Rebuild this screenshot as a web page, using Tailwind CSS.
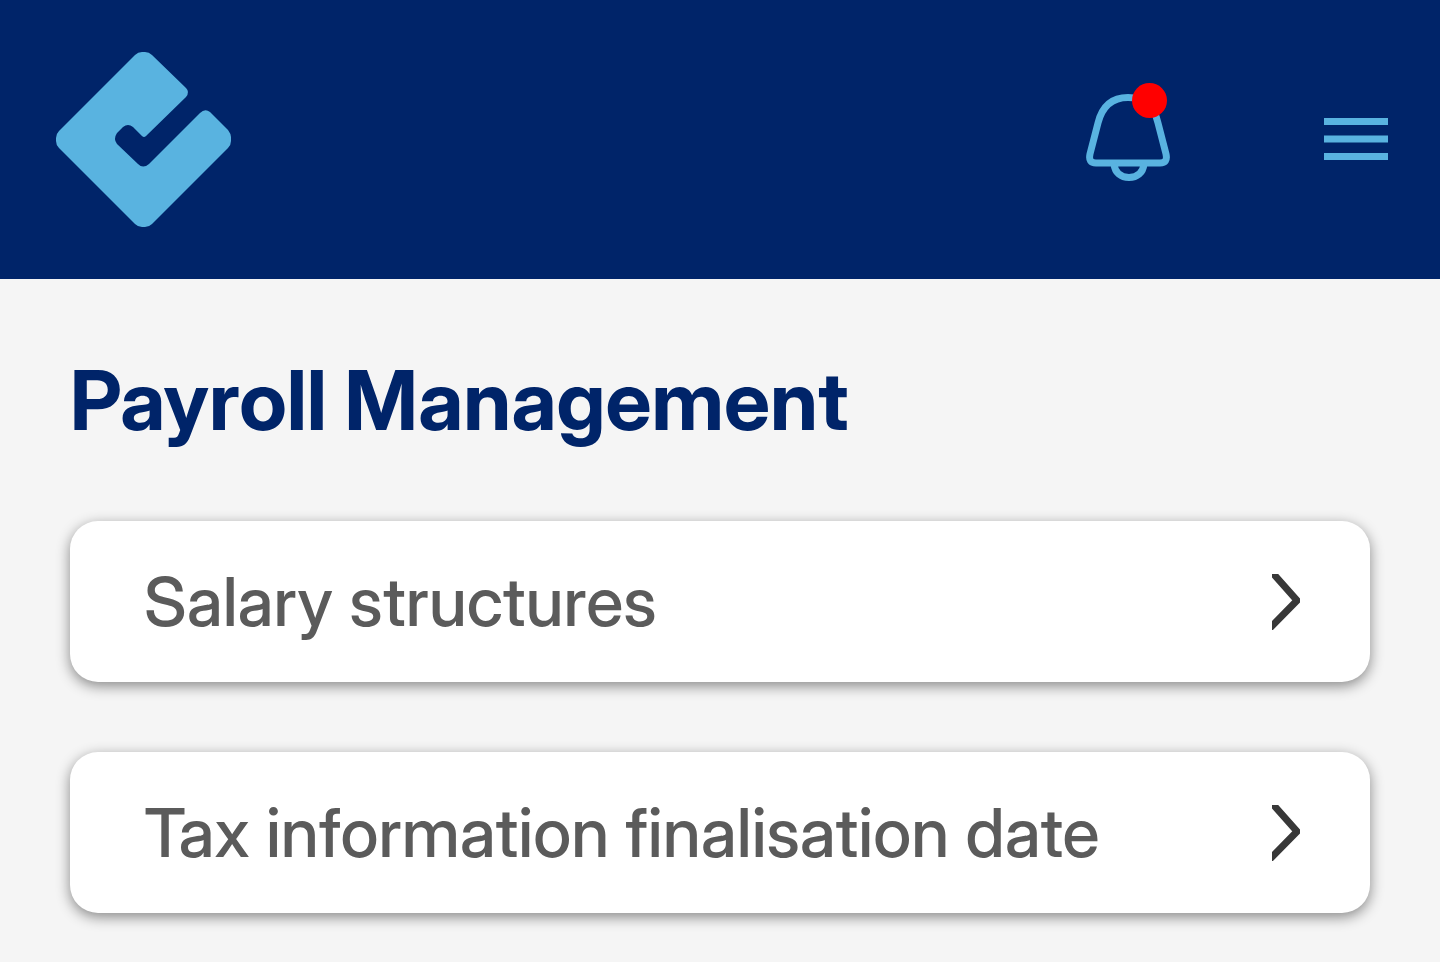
<!DOCTYPE html>
<html lang="en">
<head>
    <meta charset="UTF-8">
    <meta name="viewport" content="width=device-width, initial-scale=1.0">
    <title>Payroll Management</title>
    <script src="https://cdn.jsdelivr.net/npm/@tailwindcss/browser@4"></script>
</head>
<body class="min-h-screen bg-[#f5f5f5] font-['Inter_Display','Inter',sans-serif] [font-variation-settings:'opsz'_32]">

<!-- Top bar -->
<header class="flex items-center justify-between bg-[#002469] py-[52px] pl-14 pr-[52px]">
    <a href="#" aria-label="Home">
        <svg class="block size-[175px]" viewBox="0 0 175 175" fill="#59b3e0">
            <path d="M79 3Q82 0 86 0H89Q93 0 96 3L130 36Q134 40 130 45L90 84Q88 86 86 84L77 75Q72 71 67 75L61 81Q57 87 61 92L82 112Q87 117 93 112L144 61Q149 56 154 60L172 78Q175 82 175 85V89Q175 93 172 96L96 172Q93 175 89 175H86Q82 175 79 172L3 96Q0 93 0 89V86Q0 82 3 79Z"/>
        </svg>
    </a>
    <div class="flex items-center gap-[154px]">
        <button type="button" class="relative" aria-label="Notifications">
            <svg class="block h-[92px] w-[84px]" viewBox="0 0 84 92" fill="none" stroke="#59b3e0" stroke-width="7">
                <path d="M42 3.5C25 3.5 16 13 12 29L4 60Q2 69 10 69H74Q82 69 80 60L72 29C68 12 59 3.5 42 3.5Z"/>
                <path d="M28 70C29 79 35 83.5 43 83.5S57 79 58 70"/>
            </svg>
            <!-- Unread marker -->
            <span class="absolute -top-[11px] right-[3px] size-[35px] rounded-full bg-[#ff0000]"></span>
        </button>
        <button type="button" aria-label="Menu">
            <svg class="block h-11 w-16" viewBox="0 0 64 44" fill="#59b3e0">
                <path d="M0 0H64V7H0ZM0 17.5H64V24.5H0ZM0 35H64V42H0Z"/>
            </svg>
        </button>
    </div>
</header>

<main class="px-[70px] pt-[72px]">
    <h1 class="text-[82px] leading-[100px] font-bold text-[#002469]">Payroll Management</h1>

    <!-- Payroll sections -->
    <nav class="mt-[70px] flex flex-col gap-[70px]">
        <a href="#" class="flex items-center justify-between rounded-[28px] bg-white py-[38px] pl-[74px] pr-[70px] shadow-[0_4px_14px_rgba(0,0,0,0.45)]">
            <span class="text-[68px] leading-[85px] font-medium text-[#5b5b5b]">Salary structures</span>
            <svg class="h-14 w-7 shrink-0" viewBox="0 0 28 56" fill="none" stroke="#383838" stroke-width="7">
                <path d="M-2 -4L25 26.5L-2 54"/>
            </svg>
        </a>
        <a href="#" class="flex items-center justify-between rounded-[28px] bg-white py-[38px] pl-[74px] pr-[70px] shadow-[0_4px_14px_rgba(0,0,0,0.45)]">
            <span class="text-[68px] leading-[85px] font-medium text-[#5b5b5b]">Tax information finalisation date</span>
            <svg class="h-14 w-7 shrink-0" viewBox="0 0 28 56" fill="none" stroke="#383838" stroke-width="7">
                <path d="M-2 -4L25 26.5L-2 54"/>
            </svg>
        </a>
    </nav>
</main>

</body>
</html>
